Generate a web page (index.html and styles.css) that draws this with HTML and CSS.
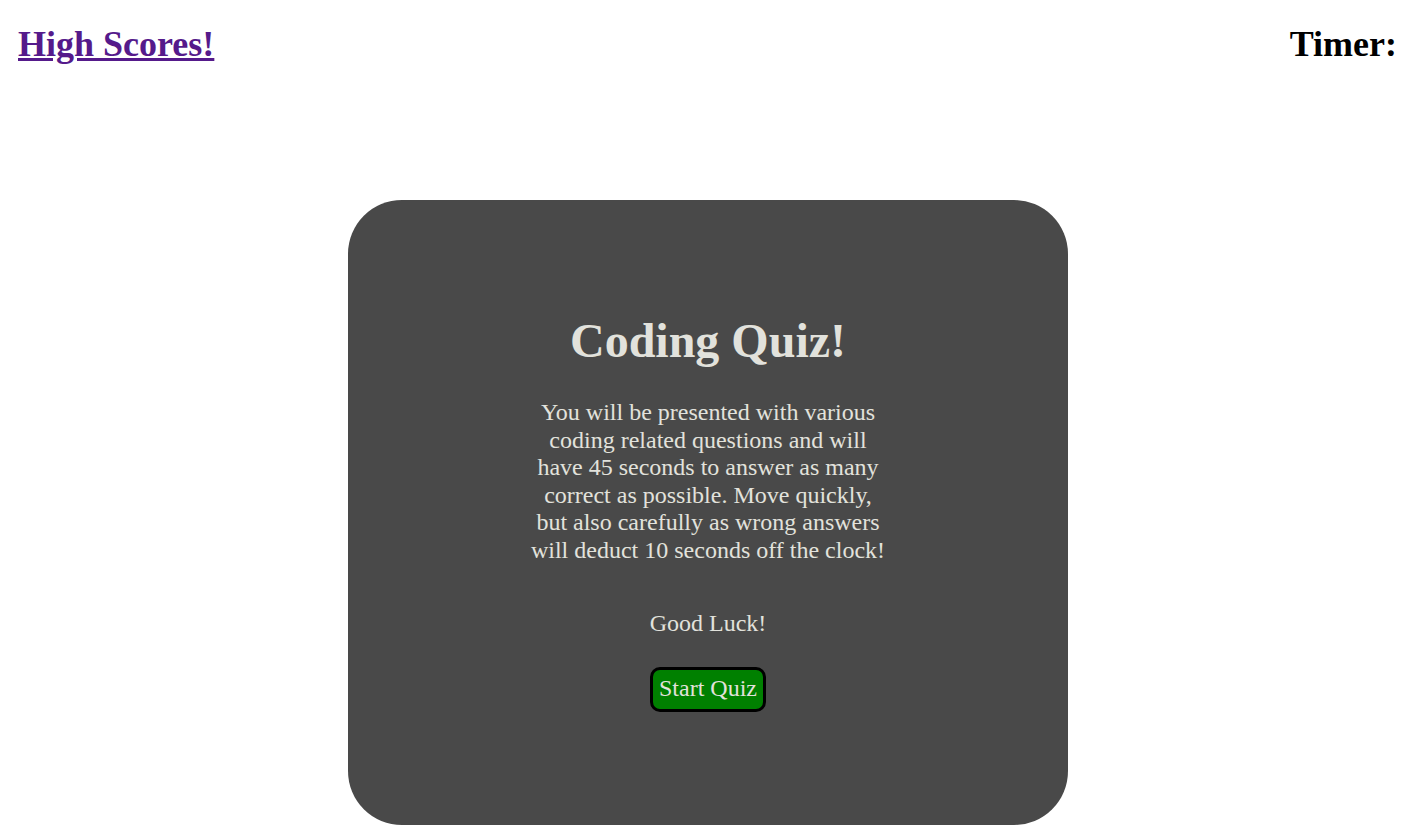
FILE: index.html
```html
<!DOCTYPE html>
<html lang="en">
<head>
<meta charset="utf-8">
<title>Coding Quiz</title>
<link rel="stylesheet" href="styles.css">
</head>
<body>
<header class="topbar">
  <h1 class="topbar-item"><a class="scores-link" href="#">High Scores!</a></h1>
  <h1 class="topbar-item">Timer:</h1>
</header>
<main class="stage">
  <section class="card">
    <h2 class="card-title">Coding Quiz!</h2>
    <p class="card-text">You will be presented with various coding related questions and will have 45 seconds to answer as many correct as possible. Move quickly, but also carefully as wrong answers will deduct 10 seconds off the clock!</p>
    <p class="card-luck">Good Luck!</p>
    <button class="start-btn" type="button">Start Quiz</button>
  </section>
</main>
</body>
</html>
```

FILE: styles.css
```css
html, body {
  margin: 0;
  padding: 0;
  background: #ffffff;
}

body {
  font-family: "Liberation Serif", "Times New Roman", serif;
  color: #000000;
}

.topbar {
  display: flex;
  justify-content: space-between;
  align-items: flex-start;
  padding: 24px 17px 0 18px;
}

.topbar-item {
  margin: 0;
  font-size: 36px;
  line-height: 41px;
  font-weight: bold;
}

.scores-link {
  color: #551a8b;
  text-decoration: underline;
}

.stage {
  display: flex;
  justify-content: center;
  padding: 135px 0 0 2px;
}

.card {
  width: 720px;
  height: 625px;
  box-sizing: border-box;
  background: #494949;
  border-radius: 54px;
  color: #e2e2dc;
  display: flex;
  flex-direction: column;
  align-items: center;
  padding-top: 113px;
}

.card-title {
  margin: 0;
  font-size: 48px;
  line-height: 55px;
  font-weight: bold;
}

.card-text {
  width: 360px;
  margin: 31px 0 0;
  font-size: 24px;
  line-height: 27.6px;
  text-align: center;
}

.card-luck {
  margin: 45px 0 0;
  font-size: 24px;
  line-height: 27.6px;
}

.start-btn {
  margin-top: 30px;
  font-family: "Liberation Serif", "Times New Roman", serif;
  font-size: 24px;
  line-height: 27.6px;
  color: #e2e2dc;
  background: #008000;
  border: 3px solid #000000;
  border-radius: 10px;
  padding: 5px 6px 6px;
  cursor: pointer;
}
```
